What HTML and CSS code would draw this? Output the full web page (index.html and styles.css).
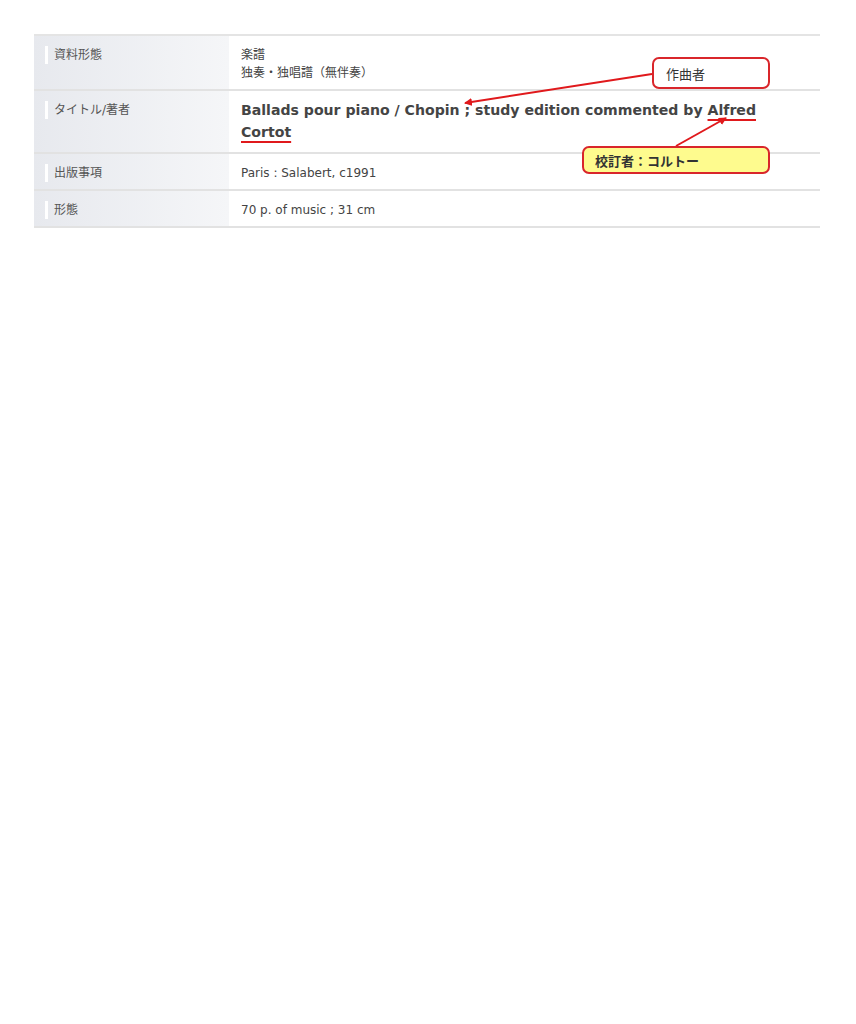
FILE: index.html
```html
<!DOCTYPE html>
<html lang="ja">

<head>
    <meta charset="utf-8">
    <meta name="viewport" content="width=device-width, initial-scale=1">
    <title>書誌詳細</title>
    <link rel="stylesheet" href="styles.css">
</head>

<body>
    <div class="sheet">
        <div class="detail">
            <div class="row">
                <div class="head"><span class="label">資料形態</span></div>
                <div class="data">楽譜<br>独奏・独唱譜（無伴奏）</div>
            </div>
            <div class="row">
                <div class="head"><span class="label">タイトル/著者</span></div>
                <div class="data title">Ballads pour piano / Chopin ; study edition commented by <span class="mark">Alfred</span> <span class="mark">Cortot</span></div>
            </div>
            <div class="row">
                <div class="head"><span class="label">出版事項</span></div>
                <div class="data">Paris : Salabert, c1991</div>
            </div>
            <div class="row">
                <div class="head"><span class="label">形態</span></div>
                <div class="data">70 p. of music ; 31 cm</div>
            </div>
        </div>

        <!-- annotations -->
        <svg class="arrows" width="856" height="240" viewBox="0 0 856 240">
            <defs>
                <marker id="head" markerWidth="8" markerHeight="8" refX="7" refY="4" orient="auto" markerUnits="userSpaceOnUse">
                    <path d="M0,0 L8,4 L0,8 Z" fill="#e0191c" />
                </marker>
            </defs>
            <line x1="652" y1="74" x2="465" y2="103" stroke="#e0191c" stroke-width="2" marker-end="url(#head)" />
            <line x1="676" y1="146" x2="726" y2="118" stroke="#e0191c" stroke-width="2" marker-end="url(#head)" />
        </svg>
        <div class="note note-composer">作曲者</div>
        <div class="note note-editor">校訂者：コルトー</div>
    </div>
</body>

</html>
```

FILE: styles.css
```css
  body {
      margin: 0;
      background: #fff;
      font-family: "DejaVu Sans", "Noto Sans CJK JP", sans-serif;
      color: #444;
  }

  .sheet {
      position: relative;
      width: 856px;
      height: 1024px;
      padding: 34px 0 0 34px;
      box-sizing: border-box;
  }

  .detail {
      width: 786px;
      border-top: 2px solid #e4e4e4;
  }

  .row {
      display: flex;
      border-bottom: 2px solid #e2e2e2;
  }

  .head {
      width: 195px;
      flex: none;
      padding: 10px 0 7px;
      background: linear-gradient(to right, #e7e9ee, #f5f6f8);
      font-size: 12px;
      line-height: 18px;
      color: #555;
  }

  .label {
      display: block;
      margin-left: 11px;
      padding-left: 6px;
      border-left: 3px solid #fff;
  }

  .data {
      flex: 1;
      padding: 10px 10px 7px;
      border-left: 2px solid #fff;
      font-size: 12px;
      line-height: 18px;
  }

  .title {
      padding: 8px 60px 9px 10px;
      font-size: 14.1px;
      font-weight: bold;
      line-height: 22px;
  }

  .mark {
      text-decoration: underline;
      text-decoration-color: #e0191c;
      text-decoration-thickness: 2px;
      text-underline-offset: 4px;
  }

  .arrows {
      position: absolute;
      left: 0;
      top: 0;
      pointer-events: none;
  }

  .note {
      position: absolute;
      box-sizing: border-box;
      border: 2px solid #d9262b;
      border-radius: 7px;
      font-size: 13px;
      color: #333;
  }

  .note-composer {
      left: 652px;
      top: 57px;
      width: 118px;
      height: 32px;
      padding: 5px 0 0 12px;
      background: #fff;
  }

  .note-editor {
      left: 582px;
      top: 146px;
      width: 188px;
      height: 28px;
      padding: 3px 0 0 11px;
      background: #fefb8e;
      font-weight: bold;
  }
```
